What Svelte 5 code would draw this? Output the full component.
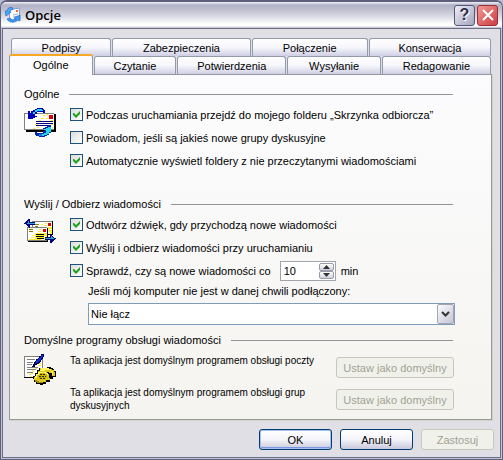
<script>
  const backTabs = [
    { label: 'Podpisy', grow: 99 },
    { label: 'Zabezpieczenia', grow: 137 },
    { label: 'Połączenie', grow: 115 },
    { label: 'Konserwacja', grow: 121 }
  ];
  const frontTabs = [
    { label: 'Ogólne', grow: 83 },
    { label: 'Czytanie', grow: 82 },
    { label: 'Potwierdzenia', grow: 109 },
    { label: 'Wysyłanie', grow: 93 },
    { label: 'Redagowanie', grow: 109 }
  ];

  let activeTab = $state('Ogólne');
  let goToInbox = $state(true);
  let notifyGroups = $state(false);
  let showUnread = $state(true);
  let playSound = $state(true);
  let sendOnStart = $state(true);
  let checkMail = $state(true);
  let minutes = $state(10);
  let offline = $state('Nie łącz');
</script>

<div class="window">
  <header class="titlebar">
    <svg class="app-icon" viewBox="0 0 16 16" aria-hidden="true">
      <path d="M4 3l10-2 1 11-10 2z" fill="#fff" stroke="#7c9cd0" />
      <rect x="11" y="3" width="2" height="2" fill="#e8703c" />
      <path d="M8 8l5-1M8 10l5-1" stroke="#9ab4dc" />
      <path d="M7 0C4 0 2 2 2 4H0l1 5 5-4H5c0-1 1-2 3-3z" fill="#4aa8f8" stroke="#1c5cb8" stroke-width=".6" />
      <path d="M2 12c2 4 8 4 11 1l2 1V8l-6 3 2 1c-2 1-5 1-6-1z" fill="#3a9cf0" stroke="#1c5cb8" stroke-width=".6" />
    </svg>
    <h1>Opcje</h1>
    <button class="caption help" aria-label="Pomoc">?</button>
    <button class="caption close" aria-label="Zamknij">
      <svg viewBox="0 0 12 12" aria-hidden="true">
        <path d="M1 1l10 10M11 1L1 11" stroke="#fff" stroke-width="2" />
      </svg>
    </button>
  </header>

  <main>
    <div class="tabs" role="tablist">
      <div class="tab-row back">
        {#each backTabs as tab}
          <button class="tab" role="tab" aria-selected={activeTab === tab.label} class:active={activeTab === tab.label} style="flex-grow: {tab.grow}" onclick={() => (activeTab = tab.label)}>{tab.label}</button>
        {/each}
      </div>
      <div class="tab-row front">
        {#each frontTabs as tab}
          <button class="tab" role="tab" aria-selected={activeTab === tab.label} class:active={activeTab === tab.label} style="flex-grow: {tab.grow}" onclick={() => (activeTab = tab.label)}>{tab.label}</button>
        {/each}
      </div>
    </div>

    <div class="panel" role="tabpanel">
      <section>
        <h2>Ogólne</h2>
        <div class="body">
          <!-- letter with two curved arrows -->
          <svg class="icon" viewBox="0 0 32 32" shape-rendering="crispEdges" aria-hidden="true">
            <path d="M2 7h30v18H2z" fill="#000" />
            <path d="M0 6h30v17H0z" fill="#808080" />
            <path d="M1 7h29v15H1z" fill="#fff" />
            <path d="M19 8h2v1h-2zM22 7h2v1h-2zM17 11h3v1h-3zM22 11h2v1h-2zM26 13h3v1h-3zM15 13h2v1h-2zM27 16h2v2h-2zM11 17h2v1h-2zM28 20h1v2h-1zM13 20h2v1h-2zM9 21h2v1H9z" fill="#ffe92e" />
            <path d="M25 8h4v4h-4z" fill="#e00000" />
            <path d="M12 14h17v1H12zM12 16h17v1H12zM12 18h13v1H12z" fill="#000080" />
            <path d="M11 2h2V1h6v1h1v1h1v3h-2V5h-6v2h-2v2h2v1h-2v1H9v1H4V4h2v2h1V4h2V3h2z" fill="#0000b8" />
            <path d="M11 3h2V2h5v1h1v1h-6v1h-2v2H9V5h2z" fill="#20d8e8" />
            <path d="M11 25h2v1h6v-2h2v-2h-2v-1h2v-1h2v-1h1v-1h3v8h-2v2h-2v1h-2v1h-6v-1h-3v-1h-1z" fill="#0028b0" />
            <path d="M20 22h2v-1h2v-1h3v5h-2v2h-2v1h-3v1h-2v-2h2v-1h2v-3h-2z" fill="#20d8e8" />
            <path d="M15 27h3v2h-3z" fill="#2078d0" />
          </svg>
          <div class="fields">
            <label class="check"><input type="checkbox" bind:checked={goToInbox} />Podczas uruchamiania przejdź do mojego folderu „Skrzynka odbiorcza”</label>
            <label class="check"><input type="checkbox" bind:checked={notifyGroups} />Powiadom, jeśli są jakieś nowe grupy dyskusyjne</label>
            <label class="check"><input type="checkbox" bind:checked={showUnread} />Automatycznie wyświetl foldery z nie przeczytanymi wiadomościami</label>
          </div>
        </div>
      </section>

      <section class="mail">
        <h2>Wyślij / Odbierz wiadomości</h2>
        <div class="body">
          <!-- two letters, arrows out to both sides -->
          <svg class="icon" viewBox="0 0 32 32" shape-rendering="crispEdges" aria-hidden="true">
            <path d="M8 4h21v14H8z" fill="#000" />
            <path d="M8 4h20v13H8z" fill="#808080" />
            <path d="M9 5h19v12H9z" fill="#fff" />
            <path d="M17 7h2v1h-2zM21 6h2v1h-2zM20 8h3v1h-3zM24 10h4v2h-4zM26 13h2v4h-2zM25 12h1v3h-1z" fill="#ffe92e" />
            <path d="M24 6h3v3h-3z" fill="#e00000" />
            <path d="M11 7h4v1h-4zM11 9h3v1h-3z" fill="#808000" />
            <path d="M4 11h20v14H4z" fill="#000" />
            <path d="M3 10h20v14H3z" fill="#808080" />
            <path d="M4 11h19v12H4z" fill="#fff" />
            <path d="M15 12h2v1h-2zM14 14h3v1h-3zM11 16h12v7H11zM8 18h2v1H8zM7 20h3v1H7zM5 22h6v1H5z" fill="#ffe92e" />
            <path d="M13 15h1v1h-1zM18 16h1v1h-1zM20 19h2v1h-2zM9 21h2v1H9zM17 22h3v1h-3z" fill="#fff" />
            <path d="M19 12h3v3h-3z" fill="#e00000" />
            <path d="M5 12h4v1H5zM5 14h4v1H5z" fill="#808000" />
            <path d="M12 17h8v1h-8zM12 19h8v1h-8zM13 21h7v1h-7z" fill="#000" />
            <path d="M0 6h1V5h1V4h1V3h1V2h2v3h5v3H6v3H5v-1H4V9H3V8H2V7H0z" fill="#000080" />
            <path d="M2 6h2V4h1v2h6v1H3z" fill="#20a8d8" />
            <path d="M21 20h5v-3h1v1h1v1h1v1h1v1h2v1h-1v1h-1v1h-1v1h-1v1h-2v-3h-5z" fill="#000080" />
            <path d="M21 21h6v-2h1v1h1v1h1v1h-9z" fill="#20a8b8" />
          </svg>
          <div class="fields">
            <label class="check"><input type="checkbox" bind:checked={playSound} />Odtwórz dźwięk, gdy przychodzą nowe wiadomości</label>
            <label class="check"><input type="checkbox" bind:checked={sendOnStart} />Wyślij i odbierz wiadomości przy uruchamianiu</label>
            <div class="interval">
              <label class="check"><input type="checkbox" bind:checked={checkMail} />Sprawdź, czy są nowe wiadomości co</label>
              <div class="spinner">
                <input id="minutes" type="text" bind:value={minutes} />
                <div class="arrows">
                  <button aria-label="Więcej" onclick={() => minutes++}><svg viewBox="0 0 7 4" aria-hidden="true"><path d="M0 4L3.500 0 7 4z" fill="#333" /></svg></button>
                  <button aria-label="Mniej" onclick={() => minutes--}><svg viewBox="0 0 7 4" aria-hidden="true"><path d="M0 0h7L3.500 4z" fill="#333" /></svg></button>
                </div>
              </div>
              <label for="minutes">min</label>
            </div>
            <div class="offline">
              <label for="offline">Jeśli mój komputer nie jest w danej chwili podłączony:</label>
              <div class="combo">
                <select id="offline" bind:value={offline}>
                  <option>Nie łącz</option>
                </select>
                <span class="drop"><svg viewBox="0 0 9 6" aria-hidden="true"><path d="M1 1l3.500 3.500L8 1" fill="none" stroke="#333" stroke-width="2" /></svg></span>
              </div>
            </div>
          </div>
        </div>
      </section>

      <section class="defaults">
        <h2>Domyślne programy obsługi wiadomości</h2>
        <div class="body">
          <!-- note with a pen, and a yellow telephone -->
          <svg class="icon" viewBox="0 0 32 32" shape-rendering="crispEdges" aria-hidden="true">
            <path d="M0 2h19v22H0z" fill="#808080" />
            <path d="M1 3h17v20H1z" fill="#fff" />
            <path d="M0 23h12v1H0z" fill="#000" />
            <path d="M3 5h8v1H3zM3 8h6v1H3zM3 10h5v1H3zM3 13h11v1H3zM3 15h9v1H3zM3 18h6v1H3z" fill="#808080" />
            <path d="M8 16h1v1H8zM11 14h2v1h-2zM7 19h2v1H7zM5 20h2v1H5zM9 17h1v1H9zM15 9h2v1h-2zM14 11h3v1h-3zM6 22h2v1H6z" fill="#ffe92e" />
            <path d="M17 0h3v3h-1v2h-1v1h-1v2h-1v1h-1v1h-2v1h-2v2H8v-1h1v-2h1V8h1V7h1V5h2V4h1V2h2z" fill="#000050" />
            <path d="M17 1h2v2h-1v1h-1v2h-1v1h-1v1h-1v1h-3V8h1V7h1V6h1V5h1V4h1V3h1z" fill="#0030e0" />
            <path d="M15 14h8v-1h4v1h2v1h1v2h2v6h-3v2h-3v3h-4v2h-3v1h-3v-1h-4v-2h-2v-3H9v-3h2v-3h2v-3h2z" fill="#000" />
            <path d="M16 14h9v1h3v1h2v2h1v4h-3v-3h-3v-1h-2v2h2v4h1v2h-4v2h-3v1h-3v-1h-4v-2h-2v-3h2v-3h2v-3h2z" fill="#e0c820" />
            <path d="M17 14h8v1h2v1h-6v1h-5v-1h1zM14 18h8v1h2v2h-2v-1h-7v1h-2v3h-2v-2h1v-2h2zM27 17h2v4h-1v-3h-1z" fill="#fff55c" />
            <path d="M16 19h5v1h2v4h-1v1h-7v-1h-1v-3h2z" fill="#c8b000" />
            <path d="M16 20h2v1h-2zM19 20h2v1h-2zM15 22h2v1h-2zM18 22h2v1h-2zM21 22h1v1h-1zM16 24h2v1h-2zM19 24h2v1h-2z" fill="#303000" />
            <path d="M11 26h2v1h2v1h4v1h-6v-1h-2z" fill="#a08800" />
          </svg>
          <div class="fields">
            <div class="handler">
              <p>Ta aplikacja jest domyślnym programem obsługi poczty</p>
              <button class="push wide" disabled>Ustaw jako domyślny</button>
            </div>
            <div class="handler">
              <p>Ta aplikacja jest domyślnym programem obsługi grup dyskusyjnych</p>
              <button class="push wide" disabled>Ustaw jako domyślny</button>
            </div>
          </div>
        </div>
      </section>
    </div>

    <footer>
      <button class="push ok">OK</button>
      <button class="push">Anuluj</button>
      <button class="push" disabled>Zastosuj</button>
    </footer>
  </main>
</div>

<style>
  :global(body) {
    background: #b4bcd0;
  }
  .window,
  button,
  input,
  select {
    font-family: 'Liberation Sans', Arial, sans-serif;
    font-size: 11px;
    color: #000;
  }
  .window {
    box-sizing: border-box;
    min-height: 100vh;
    display: flex;
    flex-direction: column;
    background: #c4c4d6;
    border: 1px solid #5f5f7c;
    border-top-width: 2px;
    border-radius: 7px 7px 0 0;
    line-height: 14px;
    overflow: hidden;
  }
  h1,
  h2,
  p {
    margin: 0;
    font-weight: normal;
  }
  button {
    box-sizing: border-box;
    padding: 0;
    line-height: 14px;
  }

  .titlebar {
    display: flex;
    align-items: center;
    height: 26px;
    padding: 0 4px;
    background: linear-gradient(#f4f4fa 0, #b2b2c6 3px, #c0c0d0 8px, #dcdce6 15px, #fff 22px, #fff 24px, #b8b8c8 26px);
  }
  .app-icon {
    width: 16px;
    height: 16px;
  }
  h1 {
    flex: 1;
    margin-left: 4px;
    font: 600 13px/20px 'Open Sans', 'Noto Sans', sans-serif;
  }
  .caption {
    display: flex;
    align-items: center;
    justify-content: center;
    width: 21px;
    height: 21px;
    margin-left: 2px;
    border: 1px solid #55557a;
    border-radius: 3px;
  }
  .help {
    background: linear-gradient(135deg, #eeeef6, #a4a4c0);
    color: #30304c;
    font-size: 16px;
    font-weight: bold;
    text-shadow: 1px 1px #fff;
  }
  .close {
    background: linear-gradient(135deg, #f09a94, #cc3c40);
    border-color: #a02c34;
  }
  .close svg {
    width: 12px;
    height: 12px;
  }

  main {
    flex: 1;
    display: flex;
    flex-direction: column;
    margin: 0 1px 1px;
    padding: 9px 8px 7px 6px;
    background: #dfdfe5;
    border: 1px solid #6c6c88;
  }
  .tab-row {
    display: flex;
    gap: 1px;
  }
  .back {
    padding: 0 1px 0 2px;
  }
  .front {
    padding-right: 1px;
  }
  .tab {
    flex: 1 1 0;
    height: 18px;
    border: 1px solid #919bac;
    border-bottom: 0;
    border-radius: 3px 3px 0 0;
    background: linear-gradient(#fff, #f6f6fc 50%, #cfcfe4);
    white-space: nowrap;
  }
  .tab.active {
    position: relative;
    height: 21px;
    margin: -2px 0 -1px;
    padding-bottom: 2px;
    background: #fcfcfe;
    border-top: 2px solid #f8a824;
  }

  .panel {
    flex: 1;
    padding: 12px 38px 8px 14px;
    background: linear-gradient(#fcfcfe, #f5f4f0);
    border: 1px solid #919b9c;
    box-shadow: 1px 1px #d6d2bd;
  }
  h2 {
    display: flex;
    align-items: center;
    gap: 10px;
    font-size: 11px;
    line-height: 14px;
  }
  h2::after {
    content: '';
    flex: 1;
    height: 1px;
    background: #929298;
  }
  .body {
    display: flex;
    gap: 14px;
    margin-top: 2px;
  }
  .icon {
    flex: none;
    width: 32px;
    height: 32px;
    margin-top: 4px;
  }
  .fields {
    flex: 1;
  }
  .check {
    display: flex;
    align-items: center;
    height: 23px;
  }
  .check input {
    appearance: none;
    box-sizing: border-box;
    flex: none;
    width: 13px;
    height: 13px;
    margin: 0 3px 0 0;
    border: 1px solid #1c5180;
    background: linear-gradient(135deg, #dcdcd7, #fff);
  }
  .check input:checked::before {
    content: '';
    display: block;
    width: 7px;
    height: 7px;
    margin: 2px;
    background: #21a121;
    clip-path: polygon(0 2px, 1px 2px, 3px 4px, 7px 0, 7px 3px, 3px 7px, 0 4px);
  }
  .mail {
    margin-top: 25px;
  }
  .interval {
    display: flex;
    align-items: center;
  }
  .spinner {
    box-sizing: border-box;
    display: flex;
    width: 56px;
    height: 20px;
    margin: 0 5px 0 9px;
    padding: 1px;
    border: 1px solid #a0a4ac;
    background: #fff;
  }
  .spinner input {
    flex: 1;
    min-width: 0;
    padding: 0 2px;
    border: 0;
    background: none;
  }
  .arrows {
    display: flex;
    flex-direction: column;
    width: 15px;
  }
  .arrows button {
    flex: 1;
    display: flex;
    align-items: center;
    justify-content: center;
    border: 1px solid #9a9aa8;
    border-radius: 2px;
    background: linear-gradient(#fff, #d0d0dc);
  }
  .arrows svg {
    width: 7px;
    height: 4px;
  }
  .offline {
    margin: 2px 0 0 18px;
  }
  .offline label {
    display: block;
  }
  .combo {
    display: grid;
    height: 22px;
    margin: 5px -2px 0 0;
  }
  .combo select,
  .drop {
    grid-area: 1 / 1;
  }
  select {
    appearance: none;
    box-sizing: border-box;
    padding: 0 20px 0 2px;
    border: 1px solid #7f9db9;
    border-radius: 0;
    background: #fff;
  }
  .drop {
    display: flex;
    align-items: center;
    justify-content: center;
    justify-self: end;
    width: 15px;
    margin: 1px;
    border: 1px solid #a4a4b4;
    border-radius: 2px;
    background: linear-gradient(135deg, #fafafe, #c4c4d4);
    pointer-events: none;
  }
  .drop svg {
    width: 9px;
    height: 6px;
  }

  .defaults {
    margin-top: 8px;
  }
  .defaults .body {
    margin-top: 7px;
  }
  .defaults .icon {
    margin-top: 0;
  }
  .defaults .fields {
    display: flex;
    flex-direction: column;
    gap: 11px;
    margin: 3px -1px 0 0;
  }
  .handler {
    display: flex;
    justify-content: space-between;
    height: 21px;
    line-height: 13px;
  }
  .handler p {
    flex: 1;
    margin-top: -3px;
    font-size: 10px;
  }
  .push {
    flex: none;
    width: 73px;
    height: 21px;
    border: 1px solid #003c74;
    border-radius: 3px;
    background: linear-gradient(#fff, #f4f4fa 50%, #c8c8dc);
  }
  .push.wide {
    width: 118px;
  }
  .push.ok {
    box-shadow: inset 0 0 0 1px #a8c0ee, inset 0 -2px #7a98e0;
  }
  .push:disabled {
    background: #f1f1ec;
    border-color: #c9c7ba;
    color: #a1a192;
  }
  footer {
    display: flex;
    justify-content: flex-end;
    gap: 8px;
    margin: 9px -2px 0 0;
  }
</style>
